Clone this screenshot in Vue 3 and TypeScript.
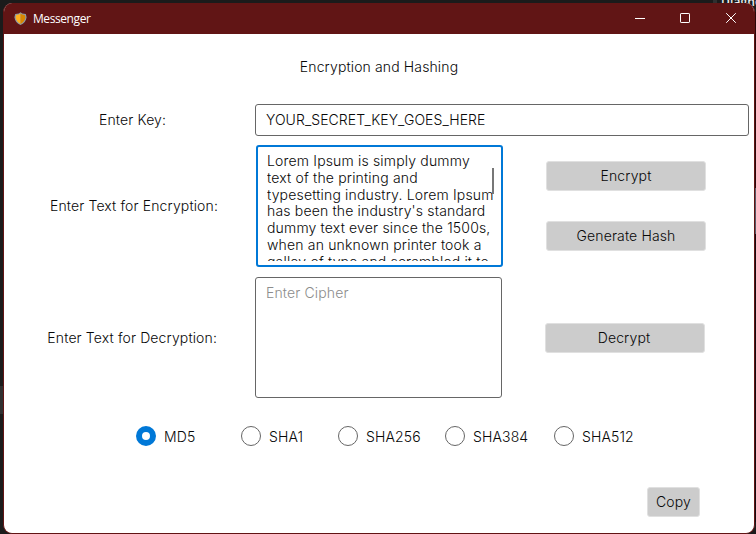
<script setup lang="ts">
import { ref } from 'vue'

const secretKey = ref('YOUR_SECRET_KEY_GOES_HERE')
const plainLines: string[] = [
  'Lorem Ipsum is simply dummy',
  'text of the printing and',
  'typesetting industry. Lorem Ipsum',
  "has been the industry's standard",
  'dummy text ever since the 1500s,',
  'when an unknown printer took a',
  'galley of type and scrambled it to',
]
const algorithms: string[] = ['MD5', 'SHA1', 'SHA256', 'SHA384', 'SHA512']
const selected = ref('MD5')
</script>

<template>
  <div class="desktop">
    <div class="behind-tab">Diagnostics</div>
    <div class="behind-left"></div>
    <div class="behind-right"></div>
    <main class="window">
      <header class="titlebar">
        <svg class="shield" width="13" height="14" viewBox="0 0 13 14">
          <path d="M6.5.2 8.3 1.4 11.8 2 12.6 5.2C12.2 9 10 11.3 6.5 13 3 11.3.8 9 .4 5.2L1.2 2 4.7 1.4Z" fill="#8d9ba5" />
          <path d="M6.5 1.4 4.8 2.6 2.2 3 1.6 5.4C2 8.4 3.8 10.4 6.5 11.9Z" fill="#ffb11f" />
          <path d="M6.5 1.4 8.2 2.6 10.8 3 11.4 5.4C11 8.4 9.2 10.4 6.5 11.9Z" fill="#d98600" />
        </svg>
        <span class="app-name">Messenger</span>
        <div class="controls">
          <svg width="12" height="12" viewBox="0 0 12 12"><path d="M1 6.5H11" /></svg>
          <svg width="12" height="12" viewBox="0 0 12 12"><rect x="1.5" y="1.5" width="9" height="9" rx=".6" /></svg>
          <svg class="close" width="12" height="12" viewBox="0 0 12 12"><path d="M1.2 1.2 10.8 10.8M10.8 1.2 1.2 10.8" /></svg>
        </div>
      </header>

      <section class="body">
        <h1 class="heading">Encryption and Hashing</h1>

        <div class="row key-row">
          <label class="key-label">Enter Key:</label>
          <div class="field key-field">{{ secretKey }}</div>
        </div>

        <div class="row encrypt-row">
          <label class="label">Enter Text for Encryption:</label>
          <div class="field area focused">
            <div class="viewport">
              <div v-for="line in plainLines" :key="line" class="line">{{ line }}</div>
            </div>
            <span class="thumb"></span>
          </div>
          <div class="actions">
            <button class="btn">Encrypt</button>
            <button class="btn">Generate Hash</button>
          </div>
        </div>

        <div class="row decrypt-row">
          <label class="label">Enter Text for Decryption:</label>
          <div class="field area placeholder">Enter Cipher</div>
          <div class="actions">
            <button class="btn">Decrypt</button>
          </div>
        </div>

        <div class="radios">
          <div
            v-for="name in algorithms"
            :key="name"
            class="radio"
            :class="[name.toLowerCase(), { on: selected === name }]"
            @click="selected = name"
          >
            <span class="circle"></span><span>{{ name }}</span>
          </div>
        </div>

        <footer class="footer"><button class="btn copy">Copy</button></footer>
      </section>
    </main>
  </div>
</template>

<style>
body {
  background: #1b1b1b;
  overflow: hidden;
}
</style>

<style scoped>
* {
  box-sizing: border-box;
}
.desktop {
  position: relative;
  width: 756px;
  height: 534px;
  padding: 3px 1px 0 3px;
  overflow: hidden;
  background: #1b1b1b;
  font-family: Inter, sans-serif;
  font-size: 14px;
  font-weight: 300;
  letter-spacing: 0.13px;
  line-height: 17px;
  color: #080808;
}
.behind-tab {
  position: absolute;
  left: 713px;
  top: 0;
  width: 43px;
  height: 12px;
  padding-left: 4px;
  border-left: 4px solid #303030;
  overflow: hidden;
  font: 600 12px/4px 'Open Sans', sans-serif;
  color: #eee;
}
.behind-left {
  position: absolute;
  left: 0;
  top: 386px;
  width: 4px;
  height: 28px;
  background: #303030;
}
.behind-right {
  position: absolute;
  right: 0;
  top: 12px;
  width: 2px;
  height: 510px;
  background: linear-gradient(#2a0709 0 176px, #555a66 176px 222px, #16090d 222px);
}
.window {
  position: relative;
  width: 752px;
  height: 531px;
  border: 1px solid #611414;
  border-top: 0;
  border-radius: 9px;
  background: #fff;
  overflow: hidden;
}
.titlebar {
  display: flex;
  align-items: center;
  height: 31px;
  padding-left: 10px;
  background: #611515;
  color: #fff;
}
.shield {
  margin-right: 6px;
}
.app-name {
  font: 400 12px/16px 'Open Sans', sans-serif;
  letter-spacing: -0.42px;
}
.controls {
  display: flex;
  gap: 33px;
  margin-left: auto;
  padding-right: 17px;
}
.controls svg {
  margin: -1px 1px 0 -1px;
  fill: none;
  stroke: #fff;
  stroke-width: 1;
}
.controls .close {
  margin: -1px 0 0;
}
.heading {
  margin: 0;
  padding-top: 24px;
  height: 70px;
  font: inherit;
  text-align: center;
}
.row {
  display: flex;
  align-items: center;
}
.key-row {
  height: 32px;
}
.key-label {
  width: 251px;
  padding: 0 0 2px 95px;
}
.label {
  width: 214px;
  padding-bottom: 1px;
  text-align: right;
  white-space: nowrap;
}
.field {
  border: 1px solid #666;
  border-radius: 3px;
}
.key-field {
  width: 494px;
  height: 32px;
  padding: 6px 10px;
  letter-spacing: 0.07px;
}
.encrypt-row {
  margin-top: 9px;
  height: 122px;
}
.area {
  position: relative;
  width: 247px;
  height: 121px;
  margin-left: 37px;
}
.focused {
  height: 122px;
  margin-left: 38px;
  border: 2px solid #0078d7;
  padding: 6px 0 4px 9px;
  letter-spacing: 0.17px;
}
.viewport {
  height: 108px;
  overflow: hidden;
}
.line {
  height: 16.8px;
  line-height: 16.8px;
  white-space: pre;
}
.thumb {
  position: absolute;
  right: 7px;
  top: 21px;
  width: 2px;
  height: 26px;
  background: #777;
}
.actions {
  display: flex;
  flex-direction: column;
  gap: 30px;
  margin-left: 43px;
}
.btn {
  width: 160px;
  height: 30px;
  padding: 0 0 2px;
  border: 1px solid #e0e0e0;
  border-radius: 3px;
  background: #ccc;
  color: #080808;
  font: inherit;
  letter-spacing: inherit;
}
.decrypt-row {
  margin-top: 10px;
  height: 121px;
}
.decrypt-row .btn,
.decrypt-row .label {
  padding-bottom: 0;
}
.decrypt-row .btn {
  padding-right: 2px;
}
.decrypt-row .label {
  padding-right: 1px;
}
.placeholder {
  padding: 6px 10px;
  color: #8c8c8c;
}
.radios {
  display: flex;
  margin-top: 28px;
  padding-left: 132px;
}
.radio {
  display: flex;
  align-items: center;
  gap: 8px;
  height: 20px;
}
.md5 {
  width: 105px;
}
.sha1 {
  width: 97px;
}
.sha256 {
  width: 107px;
}
.sha384 {
  width: 109px;
}
.circle {
  width: 20px;
  height: 20px;
  border: 1px solid #666;
  border-radius: 50%;
}
.on .circle {
  border: 6px solid #0078d7;
}
.footer {
  display: flex;
  justify-content: flex-end;
  margin-top: 41px;
  padding-right: 54px;
}
.copy {
  width: 53px;
}
</style>
